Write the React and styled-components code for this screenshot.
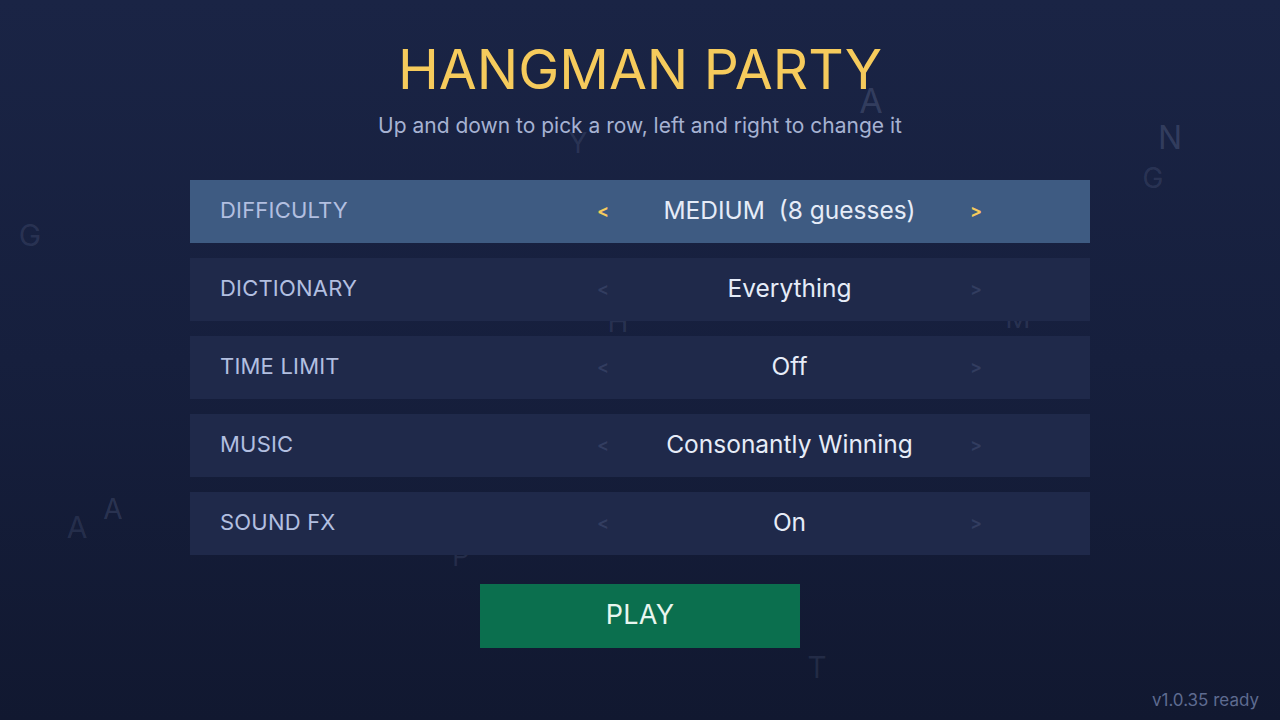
import React from "react";
import styled, { createGlobalStyle } from "styled-components";

const GlobalStyle = createGlobalStyle`
  html, body {
    margin: 0;
    padding: 0;
    height: 100%;
  }
  body {
    font-family: Inter, "Noto Sans", "Liberation Sans", sans-serif;
    background: #141c37;
  }
  #root {
    min-height: 100vh;
  }
`;

const Screen = styled.div`
  position: relative;
  height: 720px;
  width: 100%;
  overflow: hidden;
  background: linear-gradient(180deg, #1a2445 0%, #161f3d 50%, #111830 100%);
  display: flex;
  flex-direction: column;
  align-items: center;
  padding-top: 42px;
  box-sizing: border-box;
`;

/* floating letters drifting behind the menu */
const Drift = styled.span`
  position: absolute;
  z-index: 0;
  font-size: ${(p) => p.$size || 30}px;
  line-height: 1;
  color: rgba(160, 175, 215, ${(p) => p.$alpha || 0.14});
  pointer-events: none;
  user-select: none;
  transform: translate(-50%, -50%);
`;

const Content = styled.div`
  position: relative;
  z-index: 1;
  display: flex;
  flex-direction: column;
  align-items: center;
  width: 100%;
`;

const Title = styled.h1`
  margin: 0;
  font-size: 55px;
  font-weight: 400;
  line-height: 1;
  color: #f6cb5c;
`;

const Hint = styled.p`
  margin: 18px 0 0;
  font-size: 21px;
  line-height: 1;
  color: #a6b2d2;
`;

const Menu = styled.div`
  margin-top: 44px;
  width: 900px;
  display: flex;
  flex-direction: column;
  gap: 15px;
`;

const Row = styled.div`
  height: 63px;
  display: flex;
  align-items: center;
  padding: 0 0 3px 30px;
  box-sizing: border-box;
  background: ${(p) => (p.$active ? "#3e5b82" : "#1f294a")};
`;

const Label = styled.div`
  flex: 1;
  font-size: 22px;
  color: #b2bfe0;
  letter-spacing: 0.2px;
`;

const Control = styled.div`
  width: 420px;
  margin-right: 90px;
  display: flex;
  align-items: center;
  justify-content: space-between;
  padding: 0 17px 0 16px;
  box-sizing: border-box;
`;

const Arrow = styled.span`
  width: 14px;
  text-align: center;
  font-size: 18px;
  font-weight: 600;
  color: ${(p) => (p.$active ? "#f6cb5c" : "rgba(120, 135, 175, 0.22)")};
`;

const Value = styled.span`
  font-size: 24.5px;
  color: #e6ecf8;
  white-space: pre;
`;

const PlayButton = styled.button`
  margin-top: 29px;
  width: 320px;
  height: 64px;
  padding: 0 0 4px;
  border: none;
  background: #0b6f4e;
  color: #e9f6ef;
  font-family: inherit;
  font-size: 27px;
  letter-spacing: 0.3px;
  cursor: pointer;
`;

const Version = styled.div`
  position: absolute;
  right: 21px;
  bottom: 10px;
  z-index: 1;
  font-size: 17px;
  color: #5e6b90;
`;

const letters = [
  { ch: "A", x: 871, y: 101, size: 34, alpha: 0.2 },
  { ch: "Y", x: 578, y: 143, size: 28, alpha: 0.14 },
  { ch: "N", x: 1170, y: 138, size: 32, alpha: 0.2 },
  { ch: "G", x: 1153, y: 178, size: 28, alpha: 0.15 },
  { ch: "G", x: 30, y: 235, size: 30, alpha: 0.14 },
  { ch: "H", x: 618, y: 322, size: 28, alpha: 0.14 },
  { ch: "M", x: 1018, y: 318, size: 28, alpha: 0.14 },
  { ch: "A", x: 113, y: 509, size: 28, alpha: 0.18 },
  { ch: "A", x: 77, y: 527, size: 30, alpha: 0.14 },
  { ch: "P", x: 461, y: 556, size: 28, alpha: 0.12 },
  { ch: "T", x: 817, y: 667, size: 30, alpha: 0.12 },
];

const settings = [
  { label: "DIFFICULTY", value: "MEDIUM  (8 guesses)" },
  { label: "DICTIONARY", value: "Everything" },
  { label: "TIME LIMIT", value: "Off" },
  { label: "MUSIC", value: "Consonantly Winning" },
  { label: "SOUND FX", value: "On" },
];

export default function App() {
  const selected = 0;
  return (
    <>
      <GlobalStyle />
      <Screen>
        {letters.map((l, i) => (
          <Drift
            key={i}
            aria-hidden="true"
            $size={l.size}
            $alpha={l.alpha}
            style={{ left: l.x, top: l.y }}
          >
            {l.ch}
          </Drift>
        ))}
        <Content>
          <Title>HANGMAN PARTY</Title>
          <Hint>Up and down to pick a row, left and right to change it</Hint>
          <Menu>
            {settings.map((s, i) => {
              const active = i === selected;
              return (
                <Row key={s.label} $active={active}>
                  <Label>{s.label}</Label>
                  <Control>
                    <Arrow $active={active}>&lt;</Arrow>
                    <Value>{s.value}</Value>
                    <Arrow $active={active}>&gt;</Arrow>
                  </Control>
                </Row>
              );
            })}
          </Menu>
          <PlayButton>PLAY</PlayButton>
        </Content>
        <Version>v1.0.35 ready</Version>
      </Screen>
    </>
  );
}
